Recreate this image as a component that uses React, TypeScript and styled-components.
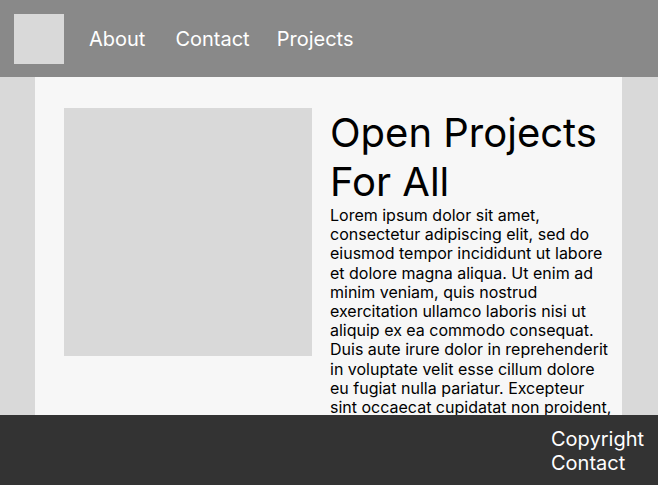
import React from "react";
import styled, { createGlobalStyle } from "styled-components";

const Global = createGlobalStyle`
  html, body { margin: 0; padding: 0; }
  body {
    background: #d9d9d9;
    font-family: Inter, "Noto Sans", sans-serif;
    color: #000;
  }
`;

const Header = styled.header`
  height: 77px;
  box-sizing: border-box;
  background: #898989;
  display: flex;
  align-items: center;
  padding: 0 14px;
`;

const Logo = styled.div`
  width: 50px;
  height: 50px;
  background: #d9d9d9;
`;

const Nav = styled.nav`
  display: flex;
  align-items: center;
`;

const NavLink = styled.a<{ $ml: number }>`
  margin-left: ${(p) => p.$ml}px;
  color: #ffffff;
  font-size: 20px;
  text-decoration: none;
`;

const Card = styled.main`
  margin: 0 36px 0 35px;
  background: #f7f7f7;
  padding: 31px 7px 120px 29px;
  display: grid;
  grid-template-columns: 248px 1fr;
  column-gap: 18px;
  align-items: start;
`;

const Picture = styled.div`
  width: 248px;
  height: 248px;
  background: #d9d9d9;
`;

const TextCol = styled.section`
  display: flex;
  flex-direction: column;
`;

const Title = styled.h1`
  margin: 0;
  padding-top: 1px;
  font-size: 40px;
  font-weight: 400;
  line-height: 48.5px;
`;

const Body = styled.p`
  margin: 0;
  font-size: 16px;
  line-height: 19.2px;
`;

const Footer = styled.footer`
  position: fixed;
  left: 0;
  right: 0;
  bottom: 0;
  height: 70px;
  box-sizing: border-box;
  background: #333333;
  display: flex;
  justify-content: flex-end;
  padding: 13px 13px 0 0;
`;

const FooterLinks = styled.div`
  display: flex;
  flex-direction: column;
  width: 94px;
`;

const FooterLink = styled.a`
  color: #ffffff;
  font-size: 20px;
  line-height: 23.5px;
  text-decoration: none;
`;

const lorem =
  "Lorem ipsum dolor sit amet, consectetur adipiscing elit, sed do eiusmod tempor incididunt ut labore et dolore magna aliqua. Ut enim ad minim veniam, quis nostrud exercitation ullamco laboris nisi ut aliquip ex ea commodo consequat. Duis aute irure dolor in reprehenderit in voluptate velit esse cillum dolore eu fugiat nulla pariatur. Excepteur sint occaecat cupidatat non proident, sunt in culpa qui officia deserunt mollit anim id est laborum.";

export default function App() {
  return (
    <>
      <Global />
      <Header>
        <Logo />
        <Nav>
          <NavLink $ml={25} href="#">About</NavLink>
          <NavLink $ml={30} href="#">Contact</NavLink>
          <NavLink $ml={27} href="#">Projects</NavLink>
        </Nav>
      </Header>
      <Card>
        <Picture />
        <TextCol>
          <Title>Open Projects For All</Title>
          <Body>{lorem}</Body>
        </TextCol>
      </Card>
      <Footer>
        <FooterLinks>
          <FooterLink href="#">Copyright</FooterLink>
          <FooterLink href="#">Contact</FooterLink>
        </FooterLinks>
      </Footer>
    </>
  );
}
